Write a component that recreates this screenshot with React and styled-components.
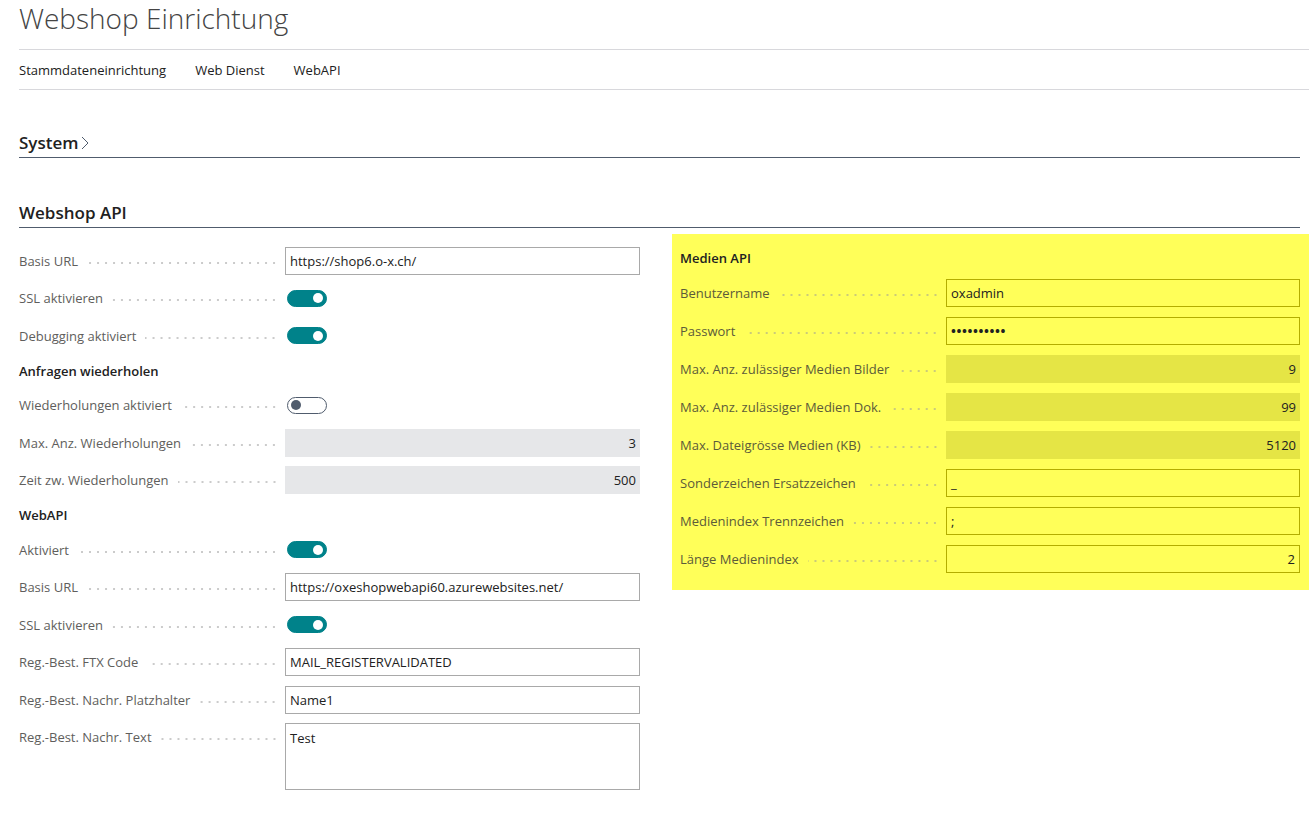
import styled, { createGlobalStyle } from 'styled-components';

const GlobalStyle = createGlobalStyle`
  body {
    margin: 0;
    background: #ffffff;
    font-family: "Segoe UI", "Open Sans", "Noto Sans", sans-serif;
    color: #212121;
  }
`;

const webshopRows = [
  { label: 'Basis URL', kind: 'input', value: 'https://shop6.o-x.ch/' },
  { label: 'SSL aktivieren', kind: 'toggle', on: true },
  { label: 'Debugging aktiviert', kind: 'toggle', on: true },
  { heading: 'Anfragen wiederholen' },
  { label: 'Wiederholungen aktiviert', kind: 'toggle', on: false },
  { label: 'Max. Anz. Wiederholungen', kind: 'readonly', value: '3' },
  { label: 'Zeit zw. Wiederholungen', kind: 'readonly', value: '500' },
  { heading: 'WebAPI' },
  { label: 'Aktiviert', kind: 'toggle', on: true },
  { label: 'Basis URL', kind: 'input', value: 'https://oxeshopwebapi60.azurewebsites.net/' },
  { label: 'SSL aktivieren', kind: 'toggle', on: true },
  { label: 'Reg.-Best. FTX Code', kind: 'input', value: 'MAIL_REGISTERVALIDATED' },
  { label: 'Reg.-Best. Nachr. Platzhalter', kind: 'input', value: 'Name1' },
  { label: 'Reg.-Best. Nachr. Text', kind: 'textarea', value: 'Test' },
];

const medienRows = [
  { label: 'Benutzername', kind: 'input', value: 'oxadmin' },
  { label: 'Passwort', kind: 'password', value: '••••••••••' },
  { label: 'Max. Anz. zulässiger Medien Bilder', kind: 'readonly', value: '9' },
  { label: 'Max. Anz. zulässiger Medien Dok.', kind: 'readonly', value: '99' },
  { label: 'Max. Dateigrösse Medien (KB)', kind: 'readonly', value: '5120' },
  { label: 'Sonderzeichen Ersatzzeichen', kind: 'input', value: '_' },
  { label: 'Medienindex Trennzeichen', kind: 'input', value: ';' },
  { label: 'Länge Medienindex', kind: 'input', value: '2', right: true },
];

const FieldRow = ({ row, hi }) => {
  if (row.heading) return <GroupHeading>{row.heading}</GroupHeading>;
  let control;
  if (row.kind === 'toggle') {
    control = (
      <Toggle on={row.on}>
        <Knob on={row.on} />
      </Toggle>
    );
  } else if (row.kind === 'readonly') {
    control = <ReadOnly hi={hi}>{row.value}</ReadOnly>;
  } else if (row.kind === 'textarea') {
    control = <TextBox>{row.value}</TextBox>;
  } else {
    control = (
      <InputBox hi={hi} right={row.right} password={row.kind === 'password'}>
        {row.value}
      </InputBox>
    );
  }
  return (
    <Row tall={row.kind === 'textarea'} hi={hi}>
      <Label hi={hi}>
        <LabelText>{row.label}</LabelText>
        <Leader hi={hi} />
      </Label>
      {control}
    </Row>
  );
};

const App = () => {
  return (
    <>
      <GlobalStyle />
      <Page>
        <Title>Webshop Einrichtung</Title>
        <NavBar>
          <NavItem>Stammdateneinrichtung</NavItem>
          <NavItem>Web Dienst</NavItem>
          <NavItem>WebAPI</NavItem>
        </NavBar>

        <Section first>
          <SectionTitle>
            System
            <Chevron viewBox="0 0 8 14">
              <path d="M1 1 L7 7 L1 13" fill="none" stroke="#505c6d" strokeWidth="1" />
            </Chevron>
          </SectionTitle>
        </Section>

        <Section>
          <SectionTitle>Webshop API</SectionTitle>
        </Section>

        <Columns>
          <Column>
            {webshopRows.map((row, i) => (
              <FieldRow key={i} row={row} />
            ))}
          </Column>
          <Highlight>
            <GroupHeading>Medien API</GroupHeading>
            {medienRows.map((row, i) => (
              <FieldRow key={i} row={row} hi />
            ))}
          </Highlight>
        </Columns>
      </Page>
    </>
  );
};

export default App;

const Page = styled.div`
  padding: 0 0 20px 19px;
`;

const Title = styled.h1`
  margin: 0;
  height: 50px;
  box-sizing: border-box;
  padding-top: 1px;
  font-size: 28px;
  font-weight: 300;
  color: #444444;
  line-height: 34px;
  border-bottom: 1px solid #d8d8dc;
`;

const NavBar = styled.div`
  display: flex;
  gap: 29px;
  height: 39px;
  align-items: center;
  border-bottom: 1px solid #d8d8dc;
  font-size: 13px;
  color: #212121;
`;

const NavItem = styled.span``;

const Section = styled.div`
  margin-right: 9px;
  padding-top: ${p => (p.first ? '39px' : '41px')};
`;

const SectionTitle = styled.h2`
  margin: 0;
  display: flex;
  align-items: center;
  height: 27px;
  font-size: 17px;
  font-weight: 600;
  color: #212121;
  border-bottom: 1px solid #505c6d;
  padding-bottom: 1px;
`;

const Chevron = styled.svg`
  width: 8px;
  height: 14px;
  margin-left: 3px;
  margin-top: 1px;
`;

const Columns = styled.div`
  display: grid;
  grid-template-columns: 621px 1fr;
  gap: 32px;
  margin-top: 6px;
  align-items: start;
`;

const Column = styled.div`
  display: flex;
  flex-direction: column;
  padding-top: 8px;
`;

const Highlight = styled.div`
  display: flex;
  flex-direction: column;
  background: #ffff59;
  padding: 8px 9px 12px 8px;
`;

const Row = styled.div`
  display: flex;
  align-items: ${p => (p.tall ? 'flex-start' : 'center')};
  height: ${p => (p.tall ? 'auto' : p.hi ? '38px' : '37.5px')};
  padding: ${p => (p.tall ? '4.75px 0' : '0')};
`;

const GroupHeading = styled.div`
  height: 32px;
  display: flex;
  align-items: center;
  font-size: 13px;
  font-weight: 600;
  color: #212121;
`;

const Label = styled.div`
  width: 266px;
  height: 28px;
  flex: none;
  display: flex;
  align-items: center;
  font-size: 13px;
  color: ${p => (p.hi ? '#5c5b3a' : '#605e5c')};
`;

const LabelText = styled.span`
  white-space: nowrap;
`;

const Leader = styled.span`
  flex: 1;
  height: 2px;
  margin: 4px 7px 0 9px;
  background-image: radial-gradient(
    circle,
    ${p => (p.hi ? '#c9c97a' : '#cacaca')} 0.7px,
    transparent 1.1px
  );
  background-size: 8px 2px;
  background-position: right center;
  background-repeat: repeat-x;
`;

const FieldBase = styled.div`
  flex: 1;
  box-sizing: border-box;
  height: 28px;
  display: flex;
  align-items: center;
  padding: 0 4px;
  font-size: 13px;
  color: #212121;
  white-space: nowrap;
`;

const InputBox = styled(FieldBase)`
  border: 1px solid ${p => (p.hi ? '#b3ad00' : '#a9a9a9')};
  background: ${p => (p.hi ? '#ffff59' : '#ffffff')};
  justify-content: ${p => (p.right ? 'flex-end' : 'flex-start')};
  letter-spacing: ${p => (p.password ? '0.6px' : 'normal')};
  font-weight: ${p => (p.password ? 700 : 400)};
`;

const ReadOnly = styled(FieldBase)`
  background: ${p => (p.hi ? '#e5e545' : '#e6e7e9')};
  justify-content: flex-end;
`;

const TextBox = styled(FieldBase)`
  height: 67px;
  align-items: flex-start;
  padding-top: 5px;
  line-height: 18px;
  border: 1px solid #a9a9a9;
  background: #ffffff;
`;

const Toggle = styled.div`
  margin-left: 2px;
  width: 40px;
  height: 17px;
  box-sizing: border-box;
  border-radius: 9px;
  display: flex;
  align-items: center;
  padding: 0 3px;
  justify-content: ${p => (p.on ? 'flex-end' : 'flex-start')};
  background: ${p => (p.on ? '#00828a' : '#ffffff')};
  border: 1px solid ${p => (p.on ? '#00828a' : '#505c6d')};
`;

const Knob = styled.span`
  width: 10px;
  height: 10px;
  border-radius: 50%;
  background: ${p => (p.on ? '#ffffff' : '#505c6d')};
`;
